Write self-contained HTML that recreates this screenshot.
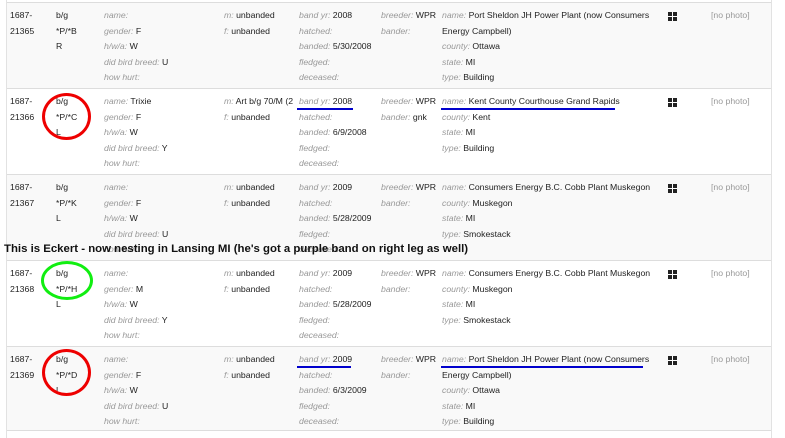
<!DOCTYPE html>
<html><head><meta charset="utf-8"><style>
*{margin:0;padding:0;box-sizing:border-box}
body{width:785px;height:438px;overflow:hidden;background:#fff;font-family:"Liberation Sans",Arial,sans-serif;font-size:8.7px;color:#222;position:relative}
.tbl{position:absolute;left:6px;top:0;width:766px;height:438px;border-left:1px solid #e2e2e2;border-right:1px solid #e2e2e2}
.row{position:absolute;left:7px;width:764px;height:86px;border-top:1px solid #ddd}
.g{background:#f9f9f9}
.c{position:absolute;top:5px;line-height:15.6px;white-space:nowrap}
.c div{height:15.6px}
i{color:#999;font-style:italic}
.ic{position:absolute;left:661px;top:9px;width:9px;height:9px;background:
linear-gradient(#fff,#fff) 4px 0/1px 9px no-repeat,linear-gradient(#fff,#fff) 0 4px/9px 1px no-repeat,#222}
.ph{position:absolute;left:704px;top:5px;line-height:15.6px;color:#999}
.circ{position:absolute;border:3px solid #e00;border-radius:50%}
.ul{position:absolute;height:2px;background:#00c}
.eck{position:absolute;left:4px;top:243px;font-weight:bold;font-size:11.4px;color:#111;z-index:5}
</style></head><body>
<div class="tbl"></div>

<div class="row g" style="top:2px">
<div class="c" style="left:3px"><div>1687-</div><div>21365</div></div>
<div class="c" style="left:49px"><div>b/g</div><div>*P/*B</div><div>R</div></div>
<div class="c" style="left:97px"><div><i>name:</i></div><div><i>gender:</i> F</div><div><i>h/w/a:</i> W</div><div><i>did bird breed:</i> U</div><div><i>how hurt:</i></div></div>
<div class="c" style="left:217px"><div><i>m:</i> unbanded</div><div><i>f:</i> unbanded</div></div>
<div class="c" style="left:292px"><div><i>band yr:</i> 2008</div><div><i>hatched:</i></div><div><i>banded:</i> 5/30/2008</div><div><i>fledged:</i></div><div><i>deceased:</i></div></div>
<div class="c" style="left:374px"><div><i>breeder:</i> WPR</div><div><i>bander:</i></div></div>
<div class="c" style="left:435px"><div><i>name:</i> Port Sheldon JH Power Plant (now Consumers</div><div>Energy Campbell)</div><div><i>county:</i> Ottawa</div><div><i>state:</i> MI</div><div><i>type:</i> Building</div></div>
<div class="ic"></div><div class="ph">[no photo]</div>
</div>

<div class="row" style="top:88px">
<div class="c" style="left:3px"><div>1687-</div><div>21366</div></div>
<div class="c" style="left:49px"><div>b/g</div><div>*P/*C</div><div>L</div></div>
<div class="c" style="left:97px"><div><i>name:</i> Trixie</div><div><i>gender:</i> F</div><div><i>h/w/a:</i> W</div><div><i>did bird breed:</i> Y</div><div><i>how hurt:</i></div></div>
<div class="c" style="left:217px;width:72px;overflow:hidden"><div><i>m:</i> Art b/g 70/M (2</div><div><i>f:</i> unbanded</div></div>
<div class="c" style="left:292px"><div><i>band yr:</i> 2008</div><div><i>hatched:</i></div><div><i>banded:</i> 6/9/2008</div><div><i>fledged:</i></div><div><i>deceased:</i></div></div>
<div class="c" style="left:374px"><div><i>breeder:</i> WPR</div><div><i>bander:</i> gnk</div></div>
<div class="c" style="left:435px"><div><i>name:</i> Kent County Courthouse Grand Rapids</div><div><i>county:</i> Kent</div><div><i>state:</i> MI</div><div><i>type:</i> Building</div></div>
<div class="ic"></div><div class="ph">[no photo]</div>
</div>

<div class="row g" style="top:174px">
<div class="c" style="left:3px"><div>1687-</div><div>21367</div></div>
<div class="c" style="left:49px"><div>b/g</div><div>*P/*K</div><div>L</div></div>
<div class="c" style="left:97px"><div><i>name:</i></div><div><i>gender:</i> F</div><div><i>h/w/a:</i> W</div><div><i>did bird breed:</i> U</div><div><i>how hurt:</i></div></div>
<div class="c" style="left:217px"><div><i>m:</i> unbanded</div><div><i>f:</i> unbanded</div></div>
<div class="c" style="left:292px"><div><i>band yr:</i> 2009</div><div><i>hatched:</i></div><div><i>banded:</i> 5/28/2009</div><div><i>fledged:</i></div><div><i>deceased:</i></div></div>
<div class="c" style="left:374px"><div><i>breeder:</i> WPR</div><div><i>bander:</i></div></div>
<div class="c" style="left:435px"><div><i>name:</i> Consumers Energy B.C. Cobb Plant Muskegon</div><div><i>county:</i> Muskegon</div><div><i>state:</i> MI</div><div><i>type:</i> Smokestack</div></div>
<div class="ic"></div><div class="ph">[no photo]</div>
</div>

<div class="row" style="top:260px">
<div class="c" style="left:3px"><div>1687-</div><div>21368</div></div>
<div class="c" style="left:49px"><div>b/g</div><div>*P/*H</div><div>L</div></div>
<div class="c" style="left:97px"><div><i>name:</i></div><div><i>gender:</i> M</div><div><i>h/w/a:</i> W</div><div><i>did bird breed:</i> Y</div><div><i>how hurt:</i></div></div>
<div class="c" style="left:217px"><div><i>m:</i> unbanded</div><div><i>f:</i> unbanded</div></div>
<div class="c" style="left:292px"><div><i>band yr:</i> 2009</div><div><i>hatched:</i></div><div><i>banded:</i> 5/28/2009</div><div><i>fledged:</i></div><div><i>deceased:</i></div></div>
<div class="c" style="left:374px"><div><i>breeder:</i> WPR</div><div><i>bander:</i></div></div>
<div class="c" style="left:435px"><div><i>name:</i> Consumers Energy B.C. Cobb Plant Muskegon</div><div><i>county:</i> Muskegon</div><div><i>state:</i> MI</div><div><i>type:</i> Smokestack</div></div>
<div class="ic"></div><div class="ph">[no photo]</div>
</div>

<div class="row g" style="top:346px;height:85px;border-bottom:1px solid #ddd">
<div class="c" style="left:3px"><div>1687-</div><div>21369</div></div>
<div class="c" style="left:49px"><div>b/g</div><div>*P/*D</div><div>L</div></div>
<div class="c" style="left:97px"><div><i>name:</i></div><div><i>gender:</i> F</div><div><i>h/w/a:</i> W</div><div><i>did bird breed:</i> U</div><div><i>how hurt:</i></div></div>
<div class="c" style="left:217px"><div><i>m:</i> unbanded</div><div><i>f:</i> unbanded</div></div>
<div class="c" style="left:292px"><div><i>band yr:</i> 2009</div><div><i>hatched:</i></div><div><i>banded:</i> 6/3/2009</div><div><i>fledged:</i></div><div><i>deceased:</i></div></div>
<div class="c" style="left:374px"><div><i>breeder:</i> WPR</div><div><i>bander:</i></div></div>
<div class="c" style="left:435px"><div><i>name:</i> Port Sheldon JH Power Plant (now Consumers</div><div>Energy Campbell)</div><div><i>county:</i> Ottawa</div><div><i>state:</i> MI</div><div><i>type:</i> Building</div></div>
<div class="ic"></div><div class="ph">[no photo]</div>
</div>

<div class="eck">This is Eckert - now nesting in Lansing MI (he's got a purple band on right leg as well)</div>

<div class="circ" style="left:42px;top:93px;width:49px;height:47px"></div>
<div class="circ" style="left:41px;top:261px;width:52px;height:39px;border-color:#1e1"></div>
<div class="circ" style="left:42px;top:349px;width:49px;height:47px"></div>

<div class="ul" style="left:297px;top:108px;width:56px"></div>
<div class="ul" style="left:441px;top:108px;width:174px"></div>
<div class="ul" style="left:297px;top:366px;width:54px"></div>
<div class="ul" style="left:441px;top:366px;width:202px"></div>
</body></html>
